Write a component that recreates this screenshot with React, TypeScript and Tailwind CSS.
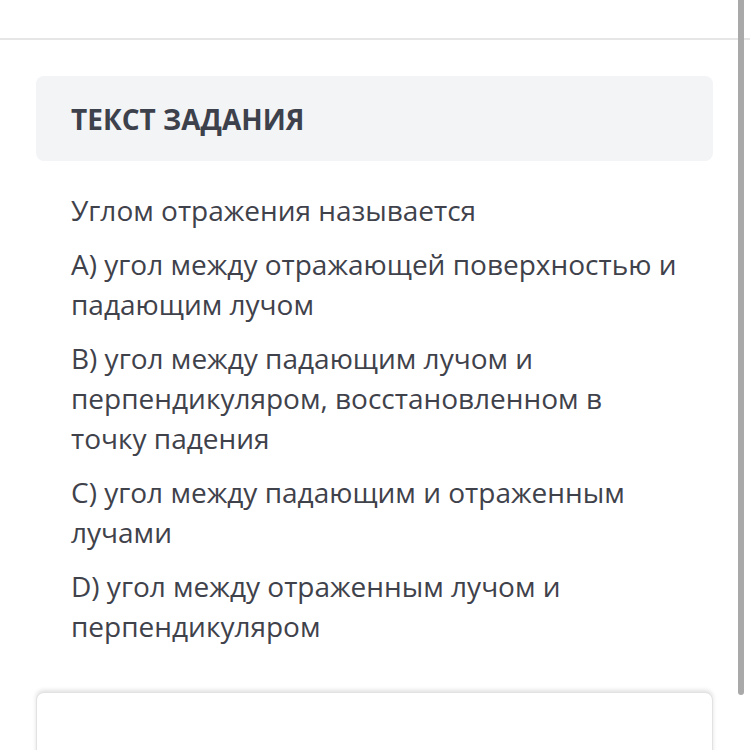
import React from "react";

const paragraphs = [
  "Углом отражения называется",
  "А) угол между отражающей поверхностью и падающим лучом",
  "В) угол между падающим лучом и перпендикуляром, восстановленном в точку падения",
  "С) угол между падающим и отраженным лучами",
  "D) угол между отраженным лучом и перпендикуляром",
];

export default function App() {
  return (
    <div
      className="relative w-[750px] h-[750px] overflow-hidden bg-white"
      style={{ fontFamily: '"Open Sans", "Noto Sans", sans-serif' }}
    >
      <div className="h-[40px] border-b-2 border-[#e6e6e6]" />
      <div className="px-[36px] pr-[37px] pt-[36px]">
        <div className="h-[85px] rounded-[8px] bg-[#f3f4f6] flex items-center px-[35px]">
          <h2 className="text-[28px] font-bold text-[#3d414b] leading-none">
            ТЕКСТ ЗАДАНИЯ
          </h2>
        </div>
        <div className="pl-[35px] pr-[33px] pt-[29px] flex flex-col gap-[14px] text-[28px] leading-[40px] text-[#3f424b]">
          {paragraphs.map((p) => (
            <p key={p}>{p}</p>
          ))}
        </div>
        <div className="mt-[46px] h-[80px] rounded-t-[8px] border border-[#e2e2e2] shadow-[0_-2px_4px_rgba(0,0,0,0.12)] bg-white" />
      </div>
      <div className="absolute right-[6px] top-0 w-[6px] h-[695px] rounded-b-[3px] bg-[#a9a9a9]" />
    </div>
  );
}
